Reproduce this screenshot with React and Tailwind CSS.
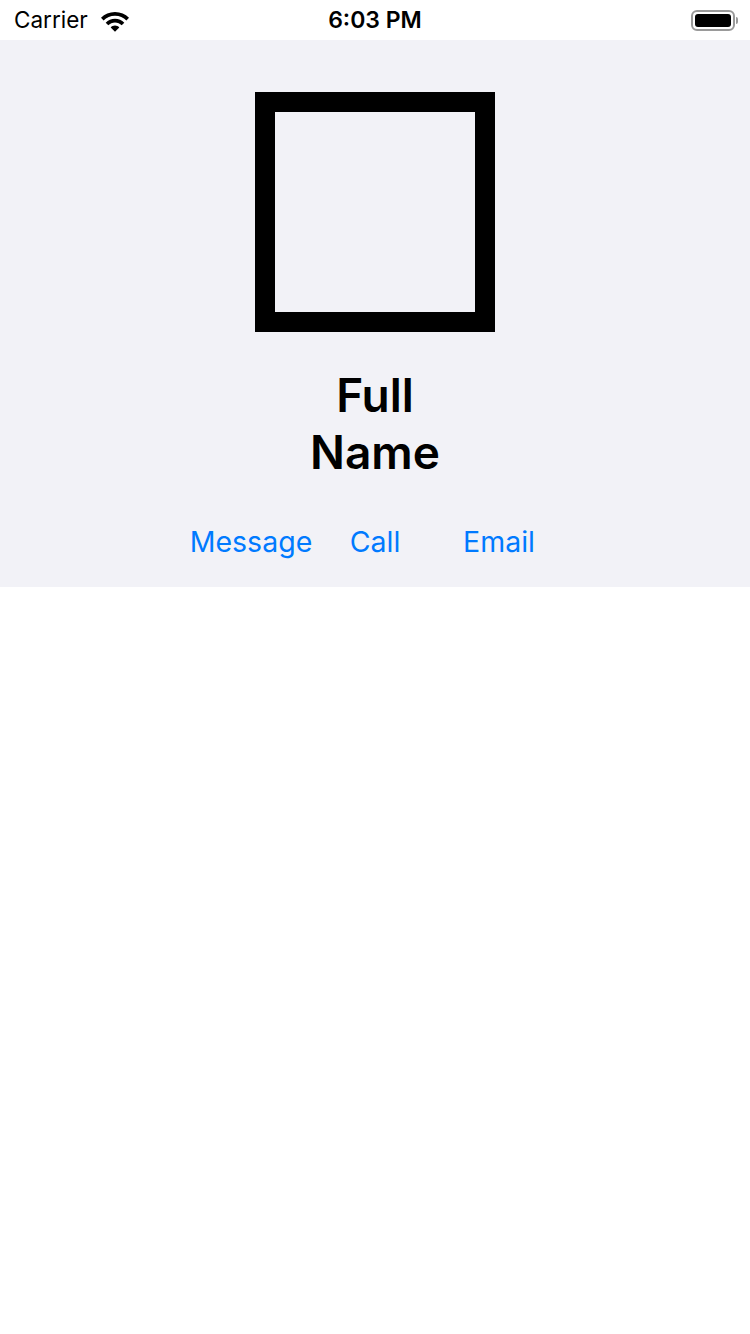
export default function App() {
  return (
    <div className="w-[750px] h-[1334px] bg-white flex flex-col" style={{ fontFamily: "Inter, 'Noto Sans', sans-serif" }}>
      <div className="h-[40px] relative flex items-center pl-[14px] pr-[12px] text-black">
        <span className="text-[22.5px] leading-none">Carrier</span>
        <svg className="ml-[11px]" width="32" height="24" viewBox="0 0 32 24">
          <path d="M16 4C10.5 4 5.6 6.2 2 9.8l2.6 2.6C7.5 9.5 11.5 7.7 16 7.7s8.5 1.8 11.4 4.7L30 9.8C26.4 6.2 21.5 4 16 4z" fill="black" />
          <path d="M16 10.8c-3.6 0-6.9 1.5-9.3 3.9l2.6 2.6c1.7-1.7 4.1-2.8 6.7-2.8s5 1.1 6.7 2.8l2.6-2.6c-2.4-2.4-5.7-3.9-9.3-3.9z" fill="black" />
          <path d="M16 17.6c-1.7 0-3.2.7-4.3 1.8L16 23.7l4.3-4.3c-1.1-1.1-2.6-1.8-4.3-1.8z" fill="black" />
        </svg>
        <span className="absolute left-0 right-0 text-center text-[23px] font-semibold leading-none pointer-events-none">6:03 PM</span>
        <div className="ml-auto flex items-center">
          <div className="w-[44px] h-[21px] rounded-[6px] border-[2px] border-[#9a9a9a] p-[2px]">
            <div className="w-full h-full rounded-[3px] bg-black" />
          </div>
          <div className="w-[2px] h-[7px] rounded-r-sm bg-[#9a9a9a] ml-[1px]" />
        </div>
      </div>
      <div className="h-[547px] bg-[#f2f2f7] flex flex-col items-center">
        <div className="mt-[52px] w-[240px] h-[240px] border-[20px] border-black" />
        <div className="mt-[35px] text-[46px] font-semibold leading-[57px] text-black text-center w-[200px]">
          Full Name
        </div>
        <div className="mt-[43px] flex">
          <div className="w-[124px] text-center text-[28.5px] text-[#007aff] leading-[36px]">Message</div>
          <div className="w-[124px] text-center text-[28.5px] text-[#007aff] leading-[36px]">Call</div>
          <div className="w-[124px] text-center text-[28.5px] text-[#007aff] leading-[36px]">Email</div>
        </div>
      </div>
    </div>
  );
}
